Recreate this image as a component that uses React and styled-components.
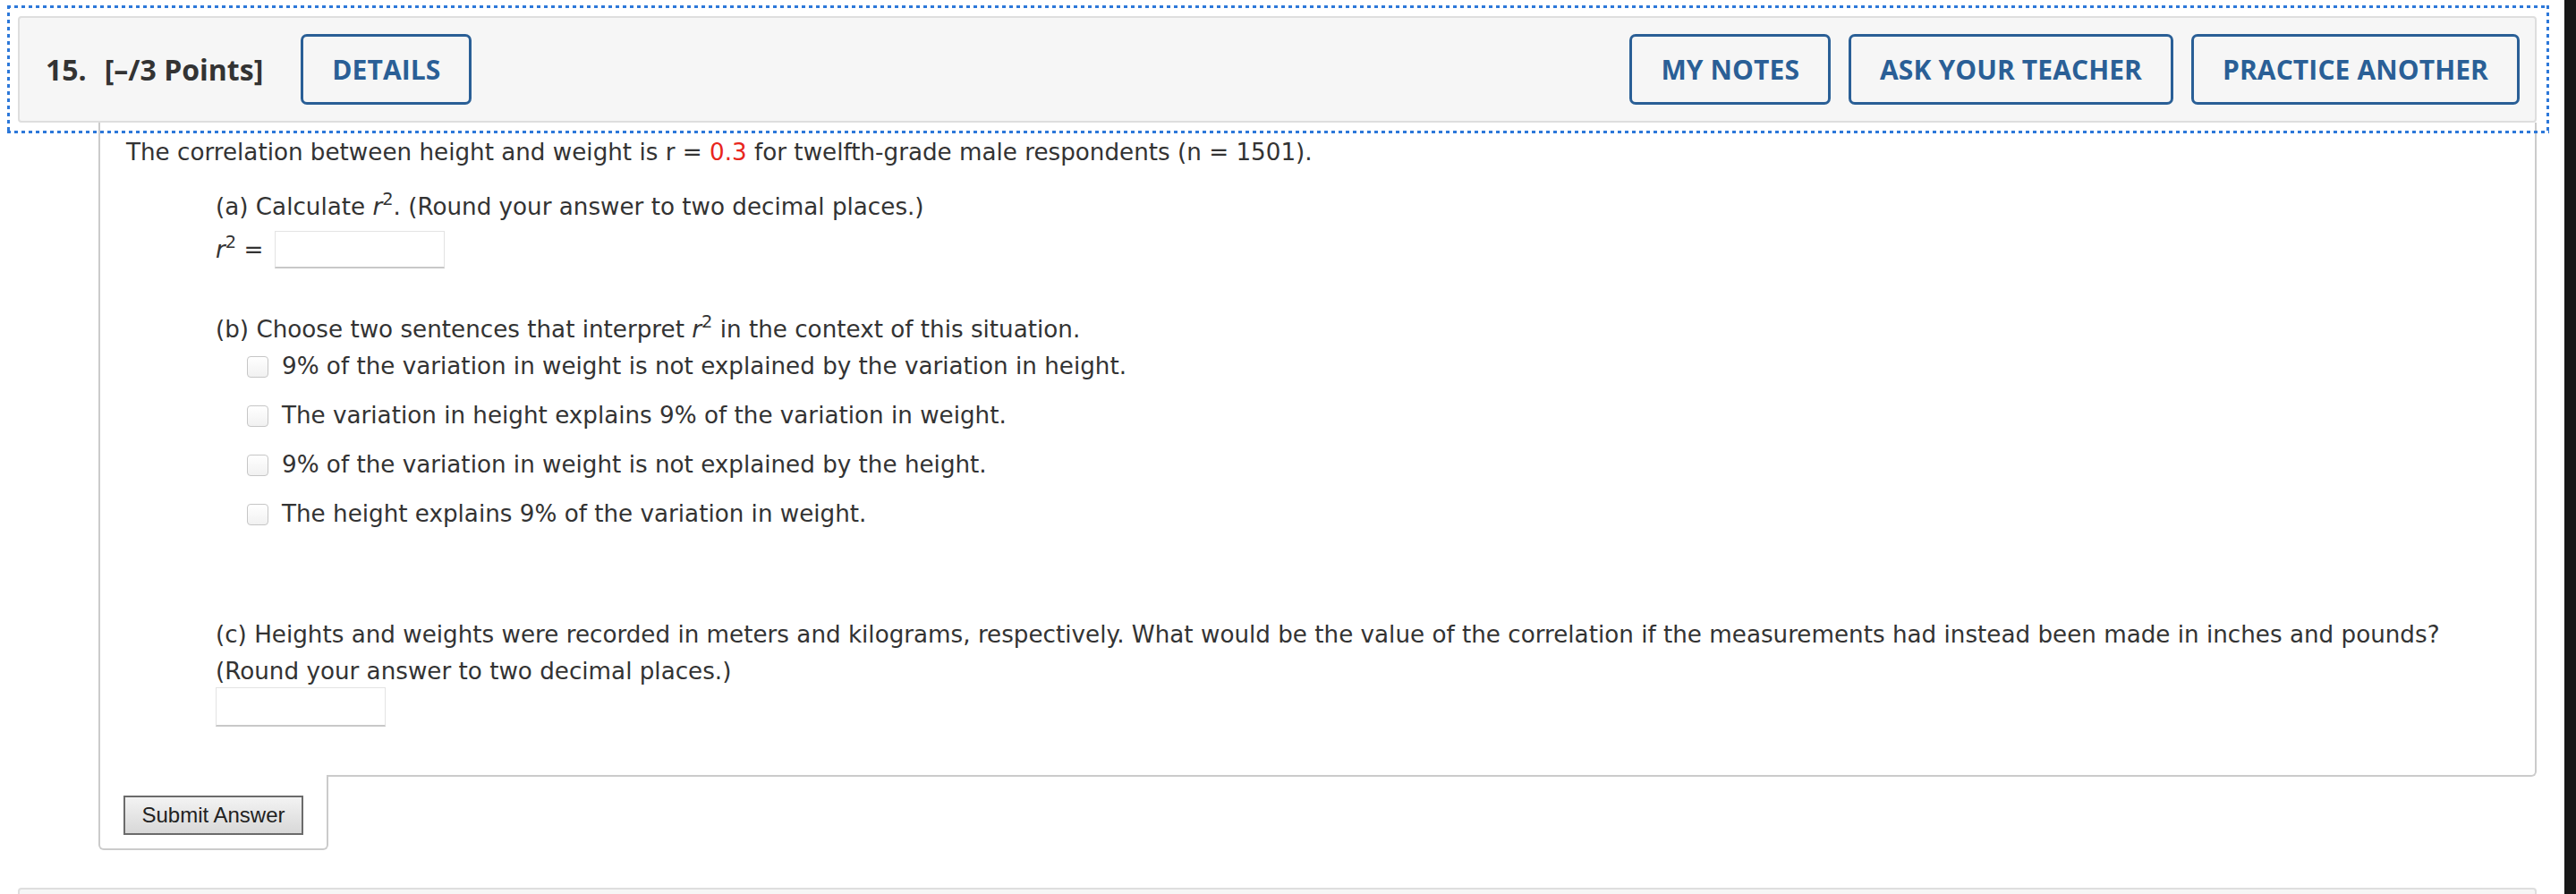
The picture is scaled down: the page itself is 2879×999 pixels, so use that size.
import React from 'react';
import styled, { createGlobalStyle } from 'styled-components';

const GlobalStyle = createGlobalStyle`
  html, body {
    margin: 0;
    padding: 0;
    background: #ffffff;
    overflow: hidden;
  }
  body {
    font-family: "DejaVu Sans", Verdana, sans-serif;
    color: #333333;
  }
`;

const Page = styled.div`
  display: flex;
  width: 2879px;
  height: 999px;
  overflow: hidden;
`;

const Main = styled.main`
  flex: 1;
  min-width: 0;
  box-sizing: border-box;
  padding: 18px 31px 0 20px;
`;

const EdgeStrip = styled.div`
  width: 13px;
  flex-shrink: 0;
  background: #171717;
`;

const dots = '#2d78d9';

const Header = styled.header`
  position: relative;
  display: flex;
  align-items: center;
  height: 119px;
  box-sizing: border-box;
  background: #f6f6f6;
  border: 2px solid #dedede;
  border-radius: 4px;
  padding: 0 17px 0 29px;
  font-family: "Open Sans", sans-serif;

  &::after {
    content: "";
    position: absolute;
    top: -14px;
    left: -14px;
    right: -16px;
    bottom: -14px;
    z-index: 2;
    pointer-events: none;
    background:
      repeating-linear-gradient(90deg, ${dots} 0 4px, transparent 4px 8px) top left / 100% 3px no-repeat,
      repeating-linear-gradient(90deg, ${dots} 0 4px, transparent 4px 8px) bottom left / 100% 3px no-repeat,
      repeating-linear-gradient(180deg, ${dots} 0 4px, transparent 4px 8px) top left / 3px 100% no-repeat,
      repeating-linear-gradient(180deg, ${dots} 0 4px, transparent 4px 8px) top right / 3px 100% no-repeat;
  }
`;

const QuestionNumber = styled.span`
  font-size: 32px;
  font-weight: 700;
  color: #333333;
  margin-right: ${(p) => p.$gap || 0}px;
`;

const HeaderActions = styled.div`
  display: flex;
  gap: 20px;
  margin-left: ${(p) => (p.$push ? 'auto' : `${p.$offset || 0}px`)};
`;

const HeaderButton = styled.button`
  height: 79px;
  box-sizing: border-box;
  padding: 0 32px;
  border: 3px solid #2a5f96;
  border-radius: 7px;
  background: transparent;
  color: #2a5f96;
  font-family: "Open Sans", sans-serif;
  font-weight: 700;
  font-size: 30px;
  letter-spacing: 0.1px;
  cursor: pointer;
`;

const QuestionBody = styled.section`
  margin-left: 90px;
  border: 2px solid #cbcbcb;
  border-top: none;
  border-radius: 0 0 6px 0;
  padding: 13px 29px 54px;
  font-size: 26.2px;
  line-height: 41px;
`;

const Text = styled.div`
  margin-top: ${(p) => p.$mt || 0}px;
  white-space: nowrap;
`;

const Red = styled.span`
  color: #e8261c;
`;

const Parts = styled.div`
  padding-left: 100px;
`;

const Var = styled.i`
  font-style: italic;
`;

const Sup = styled.sup`
  font-size: 0.74em;
  line-height: 0;
  vertical-align: 0.55em;
`;

const AnswerRow = styled.div`
  display: flex;
  align-items: center;
  gap: 13px;
  margin-top: ${(p) => p.$mt || 0}px;
`;

const AnswerInput = styled.div`
  width: 190px;
  height: ${(p) => p.$h || 42}px;
  box-sizing: border-box;
  border: 1px solid #e3e3e3;
  border-bottom: 2px solid #c8c8c8;
  background: #ffffff;
  margin-top: ${(p) => p.$mt || 0}px;
`;

const Options = styled.div`
  display: flex;
  flex-direction: column;
  gap: 14px;
  padding-left: 35px;
`;

const Option = styled.label`
  display: flex;
  align-items: center;
  gap: 15px;
  white-space: nowrap;
`;

const Checkbox = styled.span`
  width: 24px;
  height: 24px;
  box-sizing: border-box;
  border: 1.5px solid #c6c6c6;
  border-radius: 4px;
  background: linear-gradient(#ffffff, #f1f1f1);
  flex-shrink: 0;
`;

const SubmitTab = styled.div`
  width: 257px;
  height: 84px;
  box-sizing: border-box;
  margin: -2px 0 0 90px;
  padding: 23px 0 0 26px;
  background: #ffffff;
  border: 2px solid #cbcbcb;
  border-top: none;
  border-radius: 0 0 6px 6px;
`;

const SubmitButton = styled.button`
  width: 201px;
  height: 44px;
  box-sizing: border-box;
  padding: 0;
  border: 2px solid #6b6b6b;
  border-radius: 0;
  background: linear-gradient(#f3f3f3, #d8d8d8);
  color: #222222;
  font-family: "Liberation Sans", Arial, sans-serif;
  font-size: 24px;
  cursor: pointer;
`;

const NextPanel = styled.div`
  margin-top: 42px;
  height: 40px;
  background: #f6f6f6;
  border: 2px solid #dedede;
  border-bottom: none;
  border-radius: 4px 4px 0 0;
`;

const R2 = () => (
  <>
    <Var>r</Var>
    <Sup>2</Sup>
  </>
);

const options = [
  '9% of the variation in weight is not explained by the variation in height.',
  'The variation in height explains 9% of the variation in weight.',
  '9% of the variation in weight is not explained by the height.',
  'The height explains 9% of the variation in weight.',
];

export default function App() {
  return (
    <>
      <GlobalStyle />
      <Page>
        <Main>
          <Header>
            <QuestionNumber $gap={20}>15.</QuestionNumber>
            <QuestionNumber>[–/3 Points]</QuestionNumber>
            <HeaderActions $offset={42}>
              <HeaderButton>DETAILS</HeaderButton>
            </HeaderActions>
            <HeaderActions $push>
              <HeaderButton>MY NOTES</HeaderButton>
              <HeaderButton>ASK YOUR TEACHER</HeaderButton>
              <HeaderButton>PRACTICE ANOTHER</HeaderButton>
            </HeaderActions>
          </Header>
          <QuestionBody>
            <Text>
              The correlation between height and weight is r = <Red>0.3</Red> for twelfth-grade male respondents (n = 1501).
            </Text>
            <Parts>
              <Text $mt={20}>
                (a) Calculate <R2 />. (Round your answer to two decimal places.)
              </Text>
              <AnswerRow $mt={6}>
                <span>
                  <R2 /> =
                </span>
                <AnswerInput />
              </AnswerRow>
              <Text $mt={48}>
                (b) Choose two sentences that interpret <R2 /> in the context of this situation.
              </Text>
              <Options>
                {options.map((o) => (
                  <Option key={o}>
                    <Checkbox />
                    {o}
                  </Option>
                ))}
              </Options>
              <Text $mt={94}>
                (c) Heights and weights were recorded in meters and kilograms, respectively. What would be the value of the correlation if the measurements had instead been made in inches and pounds?
                <br />
                (Round your answer to two decimal places.)
              </Text>
              <AnswerInput $h={44} $mt={-3} />
            </Parts>
          </QuestionBody>
          <SubmitTab>
            <SubmitButton>Submit Answer</SubmitButton>
          </SubmitTab>
          <NextPanel />
        </Main>
        <EdgeStrip />
      </Page>
    </>
  );
}
